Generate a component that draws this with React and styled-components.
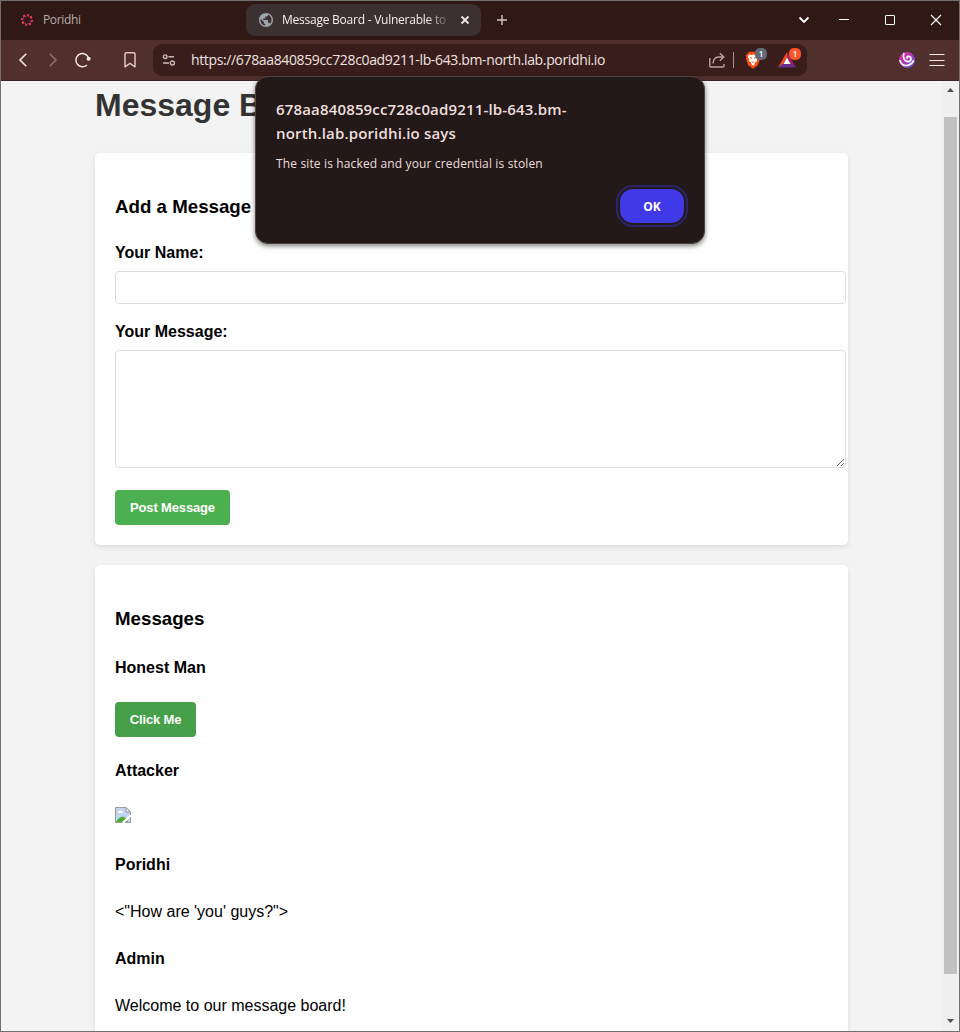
import React from "react";
import styled, { createGlobalStyle } from "styled-components";

const GlobalStyle = createGlobalStyle`
  *, *::before, *::after { box-sizing: border-box; }
  html, body { margin: 0; padding: 0; height: 100%; overflow: hidden; }
`;

const ui = `"Segoe UI", "Open Sans", "Noto Sans", sans-serif`;
const pageFont = `Arial, "Liberation Sans", sans-serif`;

const Window = styled.div`
  position: relative;
  display: flex;
  flex-direction: column;
  width: 960px;
  height: 1032px;
  border: 1px solid #707070;
  overflow: hidden;
  font-family: ${ui};
`;

const TabStrip = styled.div`
  display: flex;
  align-items: center;
  flex: 0 0 39px;
  padding-bottom: 1px;
  background: #301915;
`;

const Tab = styled.div`
  display: flex;
  align-items: center;
  flex: 0 0 ${(p) => p.$width}px;
  height: 32px;
  padding-left: ${(p) => p.$pad}px;
  border-radius: 9px;
  background: ${(p) => (p.$active ? "#3d3030" : "transparent")};
  color: ${(p) => (p.$active ? "#f4eeee" : "#b9aeac")};
`;

const TabTitle = styled.span`
  flex: 0 0 auto;
  width: ${(p) => p.$width}px;
  margin-left: ${(p) => p.$gap}px;
  overflow: hidden;
  white-space: nowrap;
  font-size: 12px;
  line-height: 18px;
  letter-spacing: ${(p) => p.$track || 0}px;
  mask-image: ${(p) =>
    p.$fade ? "linear-gradient(90deg, #000 88%, rgba(0,0,0,.25) 100%)" : "none"};
`;

const Icon = styled.svg`
  display: block;
  flex: 0 0 auto;
  width: ${(p) => p.$w}px;
  height: ${(p) => p.$h || p.$w}px;
  margin-left: ${(p) => p.$ml || 0}px;
  margin-top: ${(p) => p.$mt || 0}px;
  overflow: visible;
  fill: none;
  stroke: ${(p) => p.$stroke || "none"};
  stroke-width: ${(p) => p.$sw || 1.5};
`;

const WindowControls = styled.div`
  display: flex;
  align-items: center;
  margin-left: auto;
  padding-right: 18px;
`;

const Toolbar = styled.div`
  display: flex;
  align-items: center;
  flex: 0 0 41px;
  padding-bottom: 1px;
  background: #512f2d;
  border-bottom: 1px solid #3c2527;
`;

const AddressBar = styled.div`
  display: flex;
  align-items: center;
  flex: 0 0 654px;
  height: 32px;
  margin-left: 17px;
  border-radius: 9px;
  background: #391d1a;
`;

const Url = styled.span`
  flex: 0 0 auto;
  width: 518px;
  margin-left: 16px;
  color: #eee3e1;
  font-size: 14px;
  line-height: 20px;
  letter-spacing: -0.36px;
  white-space: nowrap;
`;

const Divider = styled.i`
  width: 1px;
  height: 16px;
  margin-left: 8px;
  background: #a39390;
`;

const Extension = styled.div`
  position: relative;
  margin-left: ${(p) => p.$ml}px;
`;

const Badge = styled.span`
  position: absolute;
  left: ${(p) => p.$left}px;
  top: -3px;
  width: 12px;
  height: 12px;
  border-radius: 5px;
  background: ${(p) => p.$color};
  color: #fff;
  font: 600 8px/12px ${ui};
  text-align: center;
`;

const Viewport = styled.div`
  display: flex;
  flex: 1;
  min-height: 0;
  overflow: hidden;
  background: #f3f3f3;
`;

const Page = styled.main`
  flex: none;
  width: 753px;
  margin-left: 94px;
  color: #000;
  font-family: ${pageFont};
  font-size: 16px;
  line-height: 1.6;
`;

const PageTitle = styled.h1`
  margin: 0 0 24px;
  color: #333;
  font-size: 32px;
  line-height: 48px;
`;

const Card = styled.section`
  display: flow-root;
  height: ${(p) => p.$height}px;
  margin-bottom: 20px;
  padding: 20px;
  border-radius: 5px;
  background: #fff;
  box-shadow: 0 2px 5px rgba(0, 0, 0, 0.1);
`;

const SectionTitle = styled.h3`
  margin: 18.72px 0;
  font-size: 18.72px;
`;

const Label = styled.label`
  display: block;
  margin-bottom: 5px;
  font-weight: bold;
`;

const TextInput = styled.input`
  display: block;
  width: 731px;
  height: 33px;
  margin-bottom: 15px;
  padding: 8px;
  border: 1px solid #ddd;
  border-radius: 4px;
  background: #fff;
`;

const MessageInput = styled.textarea`
  display: block;
  width: 731px;
  height: 118px;
  margin-bottom: 22px;
  padding: 8px;
  border: 1px solid #ddd;
  border-radius: 4px;
  background: #fff;
  resize: vertical;
`;

const GreenButton = styled.button`
  display: block;
  width: ${(p) => p.$width}px;
  height: 35px;
  padding: 0;
  border: 0;
  border-radius: 4px;
  background: ${(p) => (p.$hovered ? "#45a049" : "#4caf50")};
  color: #fff;
  font: 700 13px ${pageFont};
  letter-spacing: -0.15px;
`;

const Author = styled.h4`
  margin: 21.28px 0;
  font-size: 16px;
`;

const Text = styled.p`
  display: flow-root;
  height: 25.8px;
  margin: 16px 0;
`;

const Scrollbar = styled.aside`
  display: flex;
  flex-direction: column;
  align-items: center;
  width: 16px;
  margin-left: auto;
  padding: 7px 1px 0 0;
  background: #f0f0f0;
`;

const Thumb = styled.div`
  width: 13px;
  height: 857px;
  margin: 25px 0 45px;
  background: #c1c1c1;
`;

const Dialog = styled.div`
  position: absolute;
  left: 254px;
  top: 75px;
  display: flex;
  flex-direction: column;
  width: 450px;
  height: 168px;
  padding: 20px;
  border: 1px solid #544241;
  border-radius: 13px;
  background: #231918;
  color: #eedfdd;
  box-shadow: 0 2px 5px rgba(0, 0, 0, 0.5);
`;

const DialogTitle = styled.div`
  font-size: 15px;
  font-weight: 600;
  line-height: 24px;
  letter-spacing: 0.16px;
`;

const DialogText = styled.div`
  margin-top: 9px;
  font-size: 12px;
  line-height: 20px;
  letter-spacing: 0.14px;
  white-space: nowrap;
`;

const OkButton = styled.button`
  align-self: flex-end;
  width: 64px;
  height: 34px;
  margin-top: 15px;
  padding: 0;
  border: 0;
  border-radius: 13px;
  outline: 2px solid #2d2569;
  outline-offset: 2px;
  background: #4039e8;
  color: #fff;
  font: 700 12px ${ui};
`;

function PoridhiLogo() {
  return (
    <Icon $w={12} viewBox="0 0 12 12">
      {[0, 45, 90, 135, 180, 225, 270, 315].map((a, i) => (
        <g key={a} transform={`rotate(${a + 10} 6 6)`}>
          <rect x="5" y="0" width="2" height="2" fill={i % 2 ? "#ef4b50" : "#e52d80"} />
          <rect x="6.4" y="1.6" width="1.3" height="1.3" fill="#b92a65" />
        </g>
      ))}
    </Icon>
  );
}

function Globe() {
  return (
    <Icon $w={14} viewBox="2 2 20 20">
      <path
        d="M12 2C6.48 2 2 6.48 2 12s4.48 10 10 10 10-4.48 10-10S17.52 2 12 2zm-1 17.93c-3.95-.49-7-3.85-7-7.93 0-.62.08-1.21.21-1.79L9 15v1c0 1.1.9 2 2 2v1.93zm6.9-2.54c-.26-.81-1-1.39-1.9-1.39h-1v-3c0-.55-.45-1-1-1H8v-2h2c.55 0 1-.45 1-1V7h2c1.1 0 2-.9 2-2v-.41c2.93 1.19 5 4.06 5 7.41 0 2.08-.8 3.97-2.1 5.39z"
        fill="#9da3ac"
      />
    </Icon>
  );
}

function BrokenImage() {
  return (
    <Icon $w={16} $mt={2} viewBox="0 0 16 16">
      <path d="M.5.5H11L15.5 5V15.5H.5Z" fill="#c3d5f5" stroke="#9b9b9b" strokeWidth="1" />
      <path d="M2.5 6Q2.4 4.5 4 4.3Q4.6 2.8 6 3.5Q7.8 3.4 8 6Z" fill="#fff" />
      <path d="M1 15Q4 9.7 8 9.8Q11 10 13 15Z" fill="#4eac35" />
      <path d="M11 .5V5H15.5Z" fill="#f4f4f4" stroke="#9b9b9b" strokeWidth="1" />
      <path d="M7 15L15 8V10L9.5 15Z" fill="#fff" />
      <path d="M16.2 8.2L8 16.2" stroke="#fff" strokeWidth="1.8" />
    </Icon>
  );
}

export default function App() {
  return (
    <>
      <GlobalStyle />
      <Window>
        <TabStrip>
          <Tab $width={245} $pad={20}>
            <PoridhiLogo />
            <TabTitle $width={60} $gap={10} $track={-0.35}>Poridhi</TabTitle>
          </Tab>
          <Tab $active $width={235} $pad={13}>
            <Globe />
            <TabTitle $width={164} $gap={9} $track={-0.24} $fade>Message Board - Vulnerable to</TabTitle>
            <Icon $w={8} $ml={15} viewBox="0 0 8 8" $stroke="#eee5e4" $sw={1.8}>
              <path d="M.5.5L7.5 7.5M7.5.5L.5 7.5" />
            </Icon>
          </Tab>
          <Icon $w={10} $ml={16} viewBox="0 0 10 10" $stroke="#d1c8c7" $sw={1.4}>
            <path d="M5 0V10M0 5H10" />
          </Icon>
          <WindowControls>
            <Icon $w={10} $h={6} viewBox="0 0 10 6" $stroke="#fff" $sw={1.8}>
              <path d="M.5.5L5 5L9.5.5" />
            </Icon>
            <Icon $w={10} $ml={30} viewBox="0 0 10 10" $stroke="#fff" $sw={1}>
              <path d="M0 4.5H10" />
            </Icon>
            <Icon $w={10} $ml={36} viewBox="0 0 10 10" $stroke="#fff" $sw={1}>
              <rect x=".5" y=".5" width="9" height="9" rx=".5" />
            </Icon>
            <Icon $w={10} $ml={36} viewBox="0 0 10 10" $stroke="#fff" $sw={1.1}>
              <path d="M0 0L10 10M10 0L0 10" />
            </Icon>
          </WindowControls>
        </TabStrip>

        <Toolbar>
          <Icon $w={8} $h={14} $ml={18} viewBox="0 0 8 14" $stroke="#f2e8e7" $sw={1.6}>
            <path d="M7.3.7L1 7L7.3 13.3" />
          </Icon>
          <Icon $w={8} $h={14} $ml={22} viewBox="0 0 8 14" $stroke="#907270" $sw={1.5}>
            <path d="M.7.7L7 7L.7 13.3" />
          </Icon>
          <Icon $w={16} $h={14} $ml={18} viewBox="0 0 16 14" $stroke="#f2e8e7" $sw={1.5}>
            <path d="M12 12A6.6 6.6 0 1 1 13.2 3.8" />
            <circle cx="13.6" cy="5.8" r="2" fill="#f2e8e7" stroke="none" />
          </Icon>
          <Icon $w={12} $h={16} $ml={33} viewBox="0 0 12 16" $stroke="#d8c5c3" $sw={1.5}>
            <path d="M1 2Q1 .8 2.3.8H9.7Q11 .8 11 2V14.8L6 11.4L1 14.8Z" strokeLinejoin="round" />
          </Icon>
          <AddressBar>
            <Icon $w={12} $ml={10} viewBox="0 0 12 12" $stroke="#cbb8b5" $sw={1.4}>
              <circle cx="2.2" cy="2.7" r="1.8" />
              <path d="M5.5 2.7H11M0 9H6" />
              <circle cx="9.4" cy="9" r="2" />
            </Icon>
            <Url>https://678aa840859cc728c0ad9211-lb-643.bm-north.lab.poridhi.io</Url>
            <Icon $w={16} viewBox="0 0 16 16" $stroke="#b8a4a1" $sw={1.4}>
              <path d="M.8 6V14Q.8 15 2 15H14Q15 15 15 14V12" />
              <path d="M4 11.5Q4.4 5.2 9.5 5H14.5M10.8 1.2L14.8 5L10.8 8.8" />
            </Icon>
            <Divider />
            <Extension $ml={11}>
              <Icon $w={16} $h={18} viewBox="0 0 16 18">
                <path d="M4 .8H12L13.8 3L15.3 4.2L14.6 6.4L15 8L12.8 14.3L8 17.8L3.2 14.3L1 8L1.4 6.4L.7 4.2L2.2 3Z" fill="#fb4b12" />
                <path d="M4 3.5L6.3 4L8 3.4L9.7 4L12 3.5L13.2 6L11.7 8.4L12.2 10L9.5 11.7L10 13L8 14.7L6 13L6.5 11.7L3.8 10L4.3 8.4L2.8 6Z" fill="#fff" />
                <path d="M4.5 6.2L6.8 7L6 8M11.5 6.2L9.2 7L10 8M6.8 10.7L8 11.5L9.2 10.7" stroke="#fb4b12" strokeWidth=".8" />
              </Icon>
              <Badge $left={10} $color="#626875">1</Badge>
            </Extension>
            <Extension $ml={17}>
              <Icon $w={18} $h={16} $mt={1} viewBox="0 0 18 16">
                <path d="M9 0L0 15.5L4.6 12.8L9 5.2Z" fill="#ff4724" />
                <path d="M9 0L18 15.5L13.4 12.8L9 5.2Z" fill="#9e1f63" />
                <path d="M0 15.5H18L13.4 11.8H4.6Z" fill="#662d91" />
                <path d="M9 5.4L12.6 11.9H5.4Z" fill="#fff" />
              </Icon>
              <Badge $left={11} $color="#fb542b">1</Badge>
            </Extension>
          </AddressBar>
          <Icon $w={16} $ml={92} viewBox="0 0 16 16">
            <defs>
              <linearGradient id="swirl" x1="0" y1="0" x2="1" y2="1">
                <stop offset="0" stopColor="#ec2891" />
                <stop offset=".55" stopColor="#a23ac0" />
                <stop offset="1" stopColor="#425be5" />
              </linearGradient>
            </defs>
            <circle cx="8" cy="8" r="8" fill="url(#swirl)" />
            <path
              d="M5 1C3.8 4 4.4 9.2 8.8 9.6C12.6 9.7 13.2 4.6 9.8 4.3C8 4.2 7.4 5.8 8.6 6.6M.8 8.2C1.6 12.8 5.6 14 8.6 13.3C11.6 12.7 13.6 10.8 14.6 8.4"
              stroke="#fff"
              strokeWidth="1.7"
            />
          </Icon>
          <Icon $w={16} $h={12} $ml={14} viewBox="0 0 16 12" $stroke="#f2e8e7" $sw={1.2}>
            <path d="M.5.5H15.5M.5 6.5H15.5M.5 11.5H15.5" />
          </Icon>
        </Toolbar>

        <Viewport>
          <Page>
            <PageTitle>Message Board</PageTitle>
            <Card $height={392}>
              <SectionTitle>Add a Message</SectionTitle>
              <Label htmlFor="name">Your Name:</Label>
              <TextInput id="name" />
              <Label htmlFor="message">Your Message:</Label>
              <MessageInput id="message" />
              <GreenButton $width={115}>Post Message</GreenButton>
            </Card>
            <Card $height={500}>
              <SectionTitle>Messages</SectionTitle>
              <Author>Honest Man</Author>
              <GreenButton $width={81} $hovered>Click Me</GreenButton>
              <Author>Attacker</Author>
              <Text><BrokenImage /></Text>
              <Author>Poridhi</Author>
              <Text>&lt;"How are 'you' guys?"&gt;</Text>
              <Author>Admin</Author>
              <Text>Welcome to our message board!</Text>
            </Card>
          </Page>
          <Scrollbar>
            <Icon $w={7} $h={4} viewBox="0 0 7 4"><path d="M3.5 0L7 4H0Z" fill="#505050" /></Icon>
            <Thumb />
            <Icon $w={7} $h={4} viewBox="0 0 7 4"><path d="M0 0H7L3.5 4Z" fill="#505050" /></Icon>
          </Scrollbar>
        </Viewport>

        <Dialog role="alertdialog">
          <DialogTitle>
            678aa840859cc728c0ad9211-lb-643.bm-
            <br />
            north.lab.poridhi.io says
          </DialogTitle>
          <DialogText>The site is hacked and your credential is stolen</DialogText>
          <OkButton>OK</OkButton>
        </Dialog>
      </Window>
    </>
  );
}
